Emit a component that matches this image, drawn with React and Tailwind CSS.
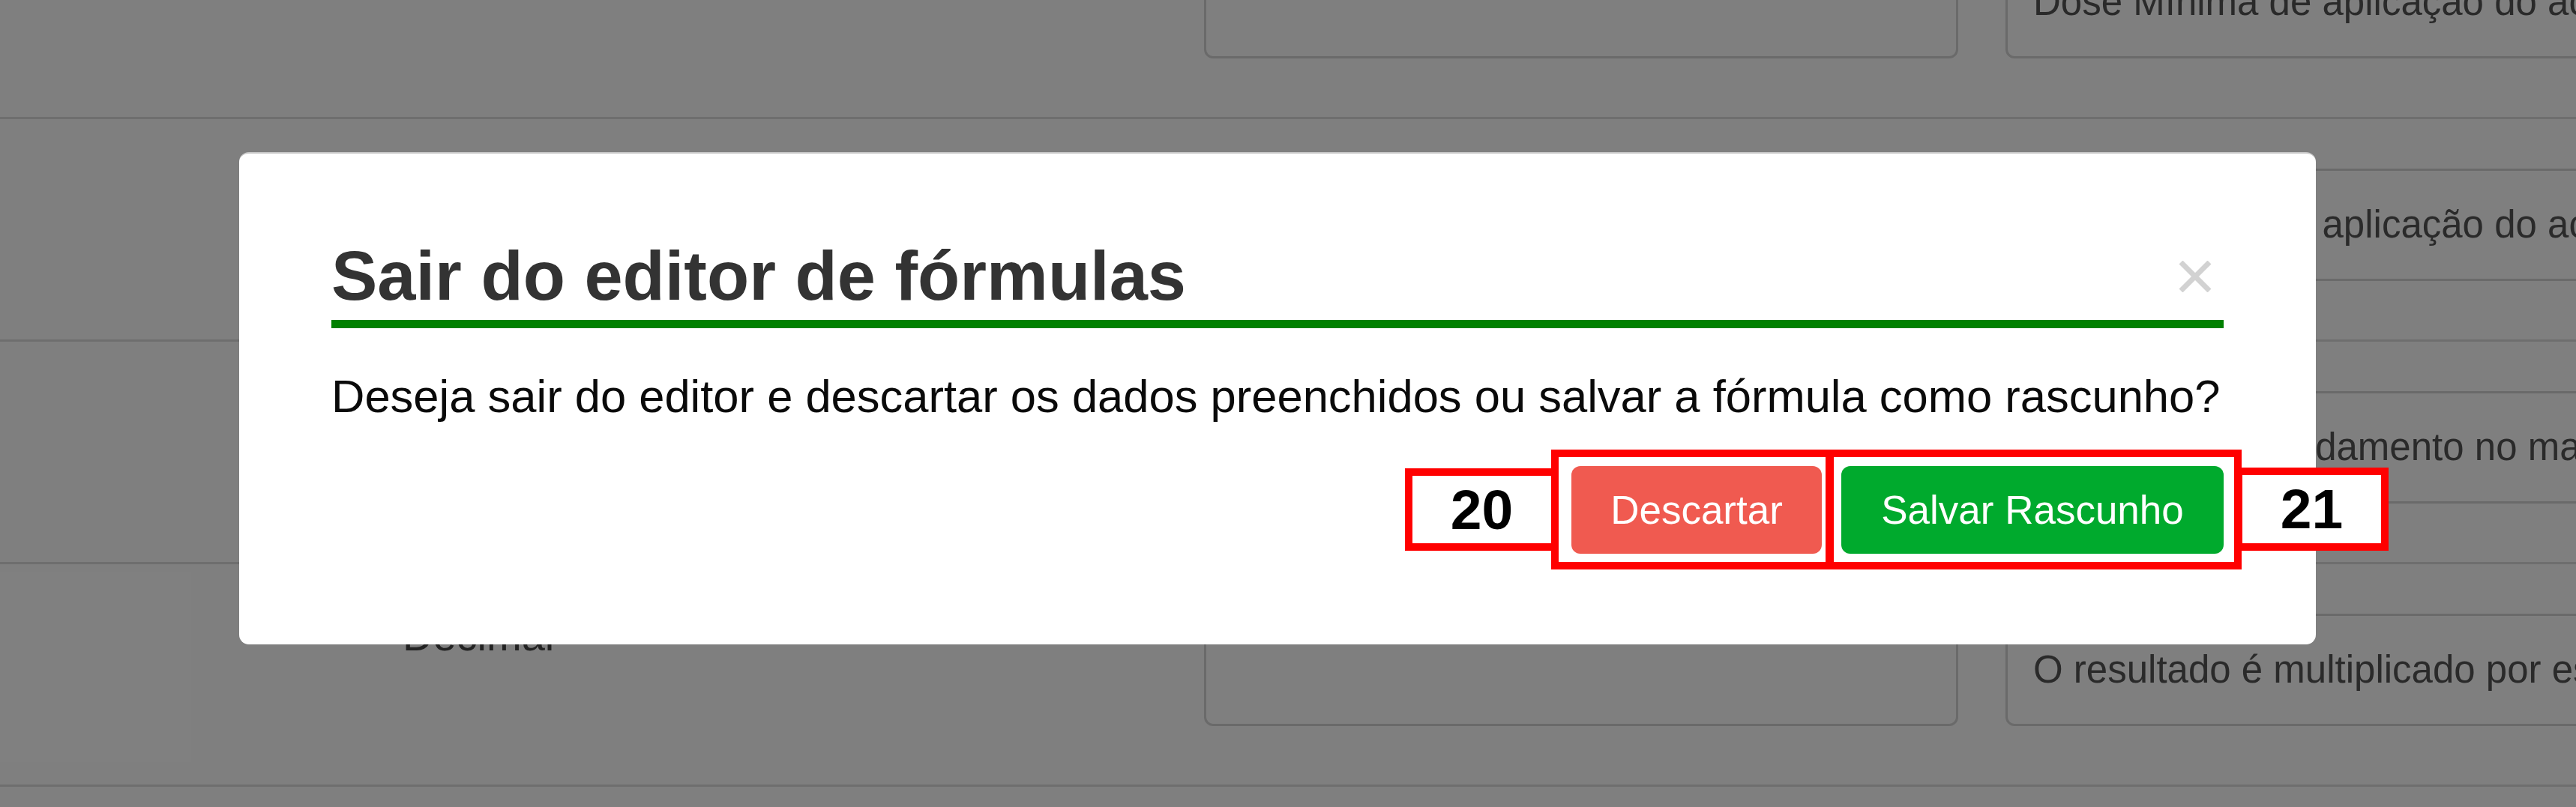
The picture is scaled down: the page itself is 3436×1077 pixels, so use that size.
export default function App() {
  const rows = [
    { label: "Dose mínima", text: "Dose Mínima de aplicação do acaricida" },
    { label: "Dose máxima", text: "Dose Mínima de aplicação do acaricida" },
    { label: "Arredondamento", text: "Valor de arredondamento no mapa de aplicação" },
    { label: "Decimal", text: "O resultado é multiplicado por este valor" },
  ];

  return (
    <div className="relative h-[1077px] w-[3436px] overflow-hidden bg-white font-['Liberation_Sans',Arial,sans-serif]">
      {/* Background page */}
      <div className="-mt-[138px]">
        {rows.map((r, i) => (
          <div
            key={i}
            className="flex h-[297px] border-b-[3px] border-[#dcdcdc] pl-[537px]"
          >
            <div className="w-[1069px] shrink-0 pt-[64px] text-[56px] leading-[64px] text-[#444]">
              {r.label}
            </div>
            <div className="mt-[66px] h-[150px] w-[1006px] shrink-0 rounded-[12px] border-[3px] border-[#d4d4d4]" />
            <div className="ml-[63px] mt-[66px] flex h-[150px] w-[1200px] shrink-0 items-center whitespace-nowrap rounded-[12px] border-[3px] border-[#d4d4d4] px-[34px] text-[51px] text-[#555]">
              {r.text}
            </div>
          </div>
        ))}
      </div>

      {/* Backdrop */}
      <div className="absolute inset-0 bg-black/50" />

      {/* Modal */}
      <div className="absolute left-[319px] top-[203px] h-[657px] w-[2770px] rounded-[13px] border-t-[2px] border-[#c8c8c8] bg-white px-[123px]">
        <div className="-mt-[2px] flex items-center justify-between border-b-[11px] border-[#008000] pb-[8px] pt-[115px]">
          <h4 className="text-[92px] font-bold leading-[101px] text-[#333]">
            Sair do editor de fórmulas
          </h4>
          <svg
            className="mr-[16px]"
            width="44"
            height="42"
            viewBox="0 0 44 42"
            fill="none"
          >
            <path
              d="M3 2 L41 40 M41 2 L3 40"
              stroke="#d2d2d2"
              strokeWidth="7"
              strokeLinecap="butt"
            />
          </svg>
        </div>
        <p className="mt-[46px] whitespace-nowrap text-[61.5px] leading-[89px] text-[#0a0a0a]">
          Deseja sair do editor e descartar os dados preenchidos ou salvar a fórmula como rascunho?
        </p>
        <div className="mt-[49px] flex justify-end gap-[26px]">
          <button className="flex h-[117px] w-[334px] items-center justify-center rounded-[12px] bg-[#f05a50] text-[53px] text-white">
            Descartar
          </button>
          <button className="flex h-[117px] w-[510px] items-center justify-center rounded-[12px] bg-[#00aa2d] text-[53px] text-white">
            Salvar Rascunho
          </button>
        </div>
      </div>

      {/* Annotation boxes */}
      <div className="absolute left-[1874px] top-[625px] flex h-[110px] w-[205px] items-center justify-center border-[10px] border-[#ff0000] bg-white text-[75px] font-bold leading-none text-black">
        20
      </div>
      <div className="absolute left-[2981px] top-[624px] flex h-[111px] w-[205px] items-center justify-center border-[10px] border-[#ff0000] bg-white text-[75px] font-bold leading-none text-black">
        21
      </div>
      <div className="absolute left-[2069px] top-[600px] h-[160px] w-[376px] border-[10px] border-[#ff0000]" />
      <div className="absolute left-[2436px] top-[600px] h-[160px] w-[554px] border-[10px] border-[#ff0000]" />
    </div>
  );
}
